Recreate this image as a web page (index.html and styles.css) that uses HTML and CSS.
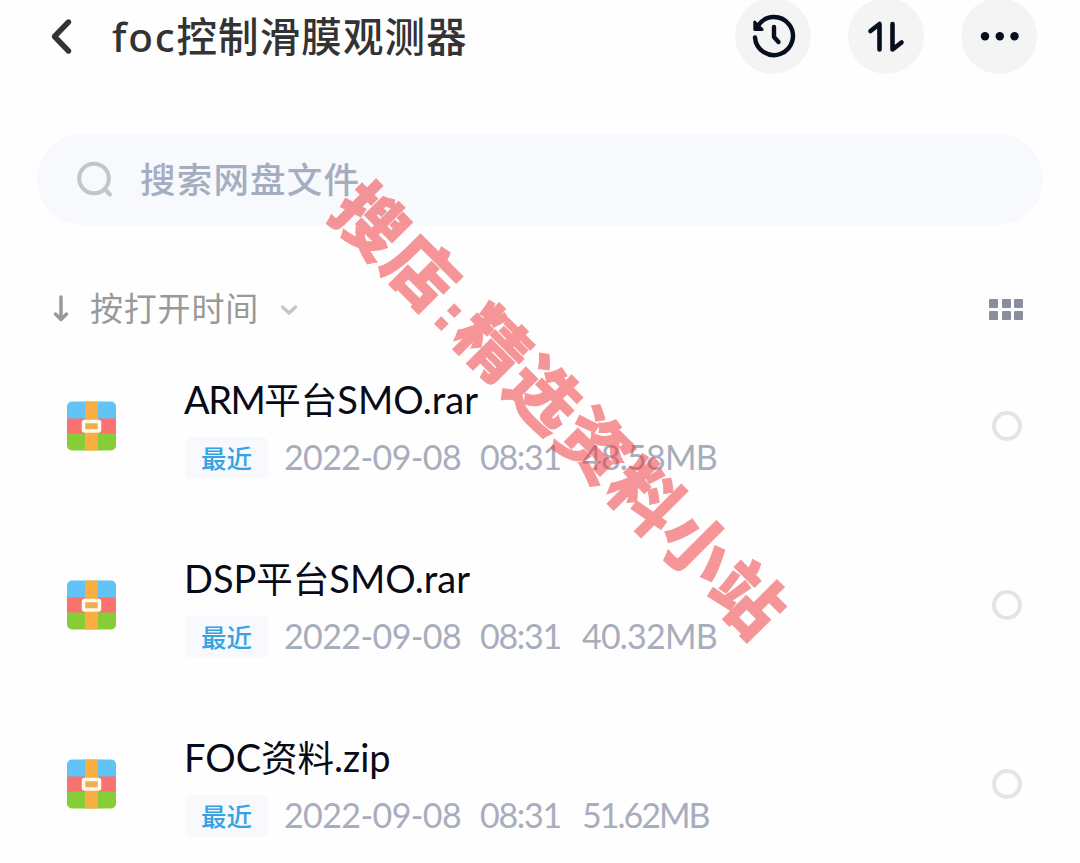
FILE: index.html
```html
<!DOCTYPE html>
<html lang="zh-CN">
<head>
    <meta charset="UTF-8">
    <meta name="viewport" content="width=device-width, initial-scale=1.0">
    <title>foc控制滑膜观测器</title>
    <link rel="stylesheet" href="styles.css">
</head>
<body>
    <svg width="0" height="0" class="defs">
        <symbol id="archive" viewBox="0 0 50 50">
            <clipPath id="corners"><rect x="0.5" y="0.5" width="49" height="49" rx="5"/></clipPath>
            <g clip-path="url(#corners)">
                <rect width="50" height="18" fill="#62c3f7"/>
                <rect y="17.5" width="50" height="15.5" fill="#f8736f"/>
                <rect y="32.5" width="50" height="18" fill="#86cd38"/>
                <rect x="18.5" width="13" height="50" fill="#f9ae42"/>
            </g>
            <rect x="17" y="20.5" width="16" height="9.5" rx="1" fill="#eeae57" stroke="#fff9e8" stroke-width="3.5"/>
        </symbol>
    </svg>
    <header class="top-bar">
        <svg class="back" width="24" height="38" viewBox="0 0 24 38" fill="none" stroke="#333" stroke-width="5.4" stroke-linecap="round" stroke-linejoin="round"><path d="M18.5 5 4.5 19.5 18.5 34"/></svg>
        <h1><span class="latin">foc</span>控制滑膜观测器</h1>
        <div class="actions">
            <button class="round-btn">
                <svg width="76" height="76" viewBox="0 0 76 76" fill="none" stroke="#070e1c" stroke-width="4.4" stroke-linecap="round" stroke-linejoin="round">
                    <path d="M20 39.5A19 19 0 1 0 23.5 27"/>
                    <path d="M19.7 24v7.5h7.5z" fill="#070e1c" stroke-width="2.8"/>
                    <path d="M39 29v10l4.5 5"/>
                </svg>
            </button>
            <button class="round-btn">
                <svg width="76" height="76" viewBox="0 0 76 76" fill="none" stroke="#070e1c" stroke-width="4.6" stroke-linecap="round" stroke-linejoin="round">
                    <path d="M22.5 33 31.5 26v25.5M44.5 26v25.5L53.5 44.5"/>
                </svg>
            </button>
            <button class="round-btn">
                <svg width="76" height="76" viewBox="0 0 76 76" fill="#070e1c">
                    <circle cx="24" cy="38.3" r="4.2"/>
                    <circle cx="38.8" cy="38.3" r="4.2"/>
                    <circle cx="53.5" cy="38.3" r="4.2"/>
                </svg>
            </button>
        </div>
    </header>
    <div class="search">
        <svg width="38" height="38" viewBox="0 0 38 38" fill="none" stroke="#c3c5c8" stroke-width="4" stroke-linecap="round"><circle cx="18" cy="17.5" r="14.8"/><path d="m28.5 28 5.5 5.5"/></svg>
        <span>搜索网盘文件</span>
    </div>
    <div class="sort">
        <svg width="16" height="28" viewBox="0 0 16 28" fill="none" stroke="#999" stroke-width="3.5" stroke-linecap="round" stroke-linejoin="round"><path d="M8 2v22M2.5 19 8 24.5 13.5 19"/></svg>
        <span class="sort-label">按打开时间</span>
        <svg width="18" height="14" viewBox="0 0 18 14" fill="none" stroke="#c6c6c8" stroke-width="3.4" stroke-linecap="round" stroke-linejoin="round"><path d="m2.5 5 6.5 6 6.5-6"/></svg>
        <div class="grid-toggle"><i></i><i></i><i></i><i></i><i></i><i></i></div>
    </div>
    <main class="files">
        <div class="file">
            <svg class="file-icon"><use href="#archive"/></svg>
            <div class="info">
                <div class="name"><span class="caps">ARM</span><span class="cjk">平台</span>SMO.rar</div>
                <div class="meta"><span class="tag">最近</span><span class="date">2022-09-08</span><span class="time">08:31</span><span class="size">48.58MB</span></div>
            </div>
            <span class="radio"></span>
        </div>
        <div class="file">
            <svg class="file-icon"><use href="#archive"/></svg>
            <div class="info">
                <div class="name">DSP<span class="cjk">平台</span>SMO.rar</div>
                <div class="meta"><span class="tag">最近</span><span class="date">2022-09-08</span><span class="time">08:31</span><span class="size">40.32MB</span></div>
            </div>
            <span class="radio"></span>
        </div>
        <div class="file">
            <svg class="file-icon"><use href="#archive"/></svg>
            <div class="info">
                <div class="name">FOC<span class="cjk">资料</span>.zip</div>
                <div class="meta"><span class="tag">最近</span><span class="date">2022-09-08</span><span class="time">08:31</span><span class="size narrow">51.62MB</span></div>
            </div>
            <span class="radio"></span>
        </div>
    </main>
    <div class="watermark">搜店<span class="colon">:</span>精选资料小站</div>
</body>
</html>
```
FILE: styles.css
```css
* {
    box-sizing: border-box;
}
body {
    margin: 0;
    width: 1080px;
    height: 863px;
    overflow: hidden;
    position: relative;
    background: #fefefe;
    font-family: Lato, "Noto Sans CJK SC", sans-serif;
}
svg {
    display: block;
    flex: none;
}
.defs {
    position: absolute;
}
.top-bar {
    display: flex;
    align-items: center;
    height: 74px;
    padding: 0 43px 0 50px;
}
.back {
    margin: -2px 38px 0 0;
}
h1 {
    margin: 0;
    color: #333;
    font-size: 40.5px;
    font-weight: 500;
    line-height: 74px;
    height: 74px;
    letter-spacing: 1.1px;
    white-space: nowrap;
}
h1 .latin {
    font-family: "Noto Sans", sans-serif;
    letter-spacing: 1.8px;
}
.actions {
    display: flex;
    gap: 37px;
    margin: -2px 0 0 auto;
}
.round-btn {
    width: 76px;
    height: 76px;
    padding: 0;
    border: none;
    border-radius: 50%;
    background: #f4f4f4;
}
.search {
    display: flex;
    align-items: center;
    gap: 26px;
    width: 1006px;
    height: 91px;
    margin: 60px 0 0 37px;
    padding-left: 39px;
    border-radius: 46px;
    background: #f7f9fd;
    color: #a5adc0;
    font-size: 35.5px;
    font-weight: 500;
    letter-spacing: 1.2px;
}
.search span {
    padding-bottom: 4px;
}
.sort {
    display: flex;
    align-items: center;
    height: 60px;
    margin-top: 54px;
    padding: 0 57px 0 53px;
    color: #999;
    font-size: 33px;
}
.sort-label {
    margin: 0 21px;
    padding-bottom: 5px;
    letter-spacing: 0.8px;
}
.grid-toggle {
    display: grid;
    grid-template-columns: repeat(3, 9px);
    gap: 3px;
    column-gap: 3.5px;
    margin-left: auto;
}
.grid-toggle i {
    height: 9px;
    border-radius: 1px;
    background: #8b8d9d;
}
.files {
    margin-top: 33px;
}
.file {
    display: flex;
    height: 179px;
    padding: 0 58px 0 66px;
}
.file:last-child {
    height: 124px;
}
.file-icon {
    width: 51px;
    height: 50px;
    margin-top: 29px;
}
.info {
    margin-left: 68px;
}
.name {
    height: 60px;
    margin-left: -1px;
    color: #070b17;
    font-size: 38px;
    line-height: 54px;
    white-space: nowrap;
}
.name .caps {
    letter-spacing: -1.5px;
}
.name .cjk {
    font-size: 36.5px;
}
.meta {
    display: flex;
    align-items: center;
    height: 42px;
    margin-top: 5px;
    color: #a8adbd;
    font-size: 34px;
    line-height: 38px;
    letter-spacing: -0.6px;
    white-space: nowrap;
}
.date, .time, .size {
    padding-bottom: 3px;
}
.tag {
    width: 83px;
    height: 42px;
    margin-right: 16px;
    border-radius: 5px;
    background: #f7f9fd;
    color: #35a3e2;
    font-size: 25.5px;
    font-weight: 500;
    letter-spacing: 0;
    line-height: 42px;
    text-align: center;
}
.date {
    width: 196px;
}
.time {
    width: 102px;
    letter-spacing: -1.3px;
}
.size {
    letter-spacing: -0.8px;
}
.size.narrow {
    letter-spacing: -2px;
}
.radio {
    width: 30px;
    height: 30px;
    margin: 39px 0 0 auto;
    border: 4px solid #e3e4e7;
    border-radius: 50%;
}
.watermark {
    position: absolute;
    left: 374px;
    top: 219px;
    height: 100px;
    margin: -50px 0 0 -36px;
    transform: rotate(45deg);
    transform-origin: 36px 50px;
    color: #ef3a3e;
    opacity: 0.53;
    font-family: "Noto Sans CJK SC", sans-serif;
    font-size: 70px;
    font-weight: 900;
    line-height: 100px;
    letter-spacing: 2.1px;
    white-space: nowrap;
    pointer-events: none;
    -webkit-text-stroke: 1px #ef3a3e;
}
.colon {
    display: inline-block;
    width: 29px;
    font-family: "Liberation Sans", sans-serif;
    font-size: 50px;
    line-height: 50px;
    text-align: center;
    -webkit-text-stroke-width: 3.5px;
}
```
